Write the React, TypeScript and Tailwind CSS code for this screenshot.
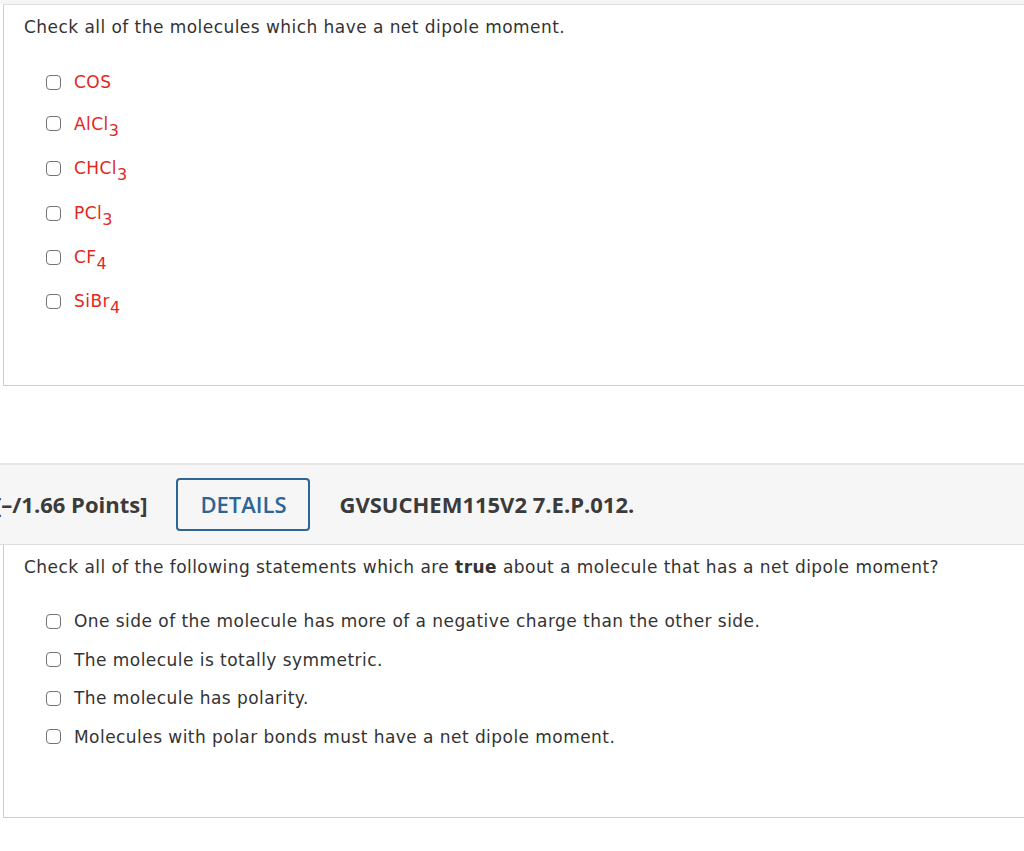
const molecules = [
  { base: 'COS', sub: '', row: 'h-[40px]' },
  { base: 'AlCl', sub: '3', row: 'h-[43px]' },
  { base: 'CHCl', sub: '3', row: 'h-[46px]' },
  { base: 'PCl', sub: '3', row: 'h-[44px]' },
  { base: 'CF', sub: '4', row: 'h-[44px]' },
  { base: 'SiBr', sub: '4', row: 'h-[44px]' },
];

const statements = [
  'One side of the molecule has more of a negative charge than the other side.',
  'The molecule is totally symmetric.',
  'The molecule has polarity.',
  'Molecules with polar bonds must have a net dipole moment.',
];

function Box() {
  return (
    <span className="inline-block h-[15px] w-[15px] shrink-0 rounded-[4px] border-[1.5px] border-[#747474] bg-white" />
  );
}

export default function App() {
  return (
    <div className="min-h-[851px] w-[1024px] overflow-hidden bg-white font-['DejaVu_Sans',Verdana,sans-serif] text-[17px] tracking-[0.45px] text-[#333]">
      {/* leftover band from the question above */}
      <div className="h-[4px] bg-[#f5f5f5]" />

      {/* question 1 */}
      <div className="ml-[3px] h-[382px] border-t border-b border-l border-t-[#dedede] border-b-[#cccccc] border-l-[#cccccc] pl-[20px] pt-[12px]">
        <p className="leading-[20px]">Check all of the molecules which have a net dipole moment.</p>
        <ul className="mt-[25px] pl-[22px]">
          {molecules.map((m) => (
            <li key={m.base} className={`flex items-center ${m.row}`}>
              <Box />
              <span className="ml-[13px] leading-[20px] text-[#e3271c]">
                {m.base}
                {m.sub && <sub className="relative top-[6px] align-baseline text-[16px]">{m.sub}</sub>}
              </span>
            </li>
          ))}
        </ul>
      </div>

      <div className="h-[77px]" />

      {/* question 2 header */}
      <div className="flex h-[82px] items-center border-t-2 border-b border-t-[#e6e6e6] border-b-[#dddddd] bg-[#f6f6f6] font-['Open_Sans',sans-serif] tracking-normal">
        <span className="-ml-[6px] text-[22px] font-bold text-[#3b3b3b]">[–/1.66 Points]</span>
        <span className="ml-[29px] flex h-[53px] w-[134px] items-center justify-center rounded-[4px] border-2 border-[#2c6596] text-[22px] font-semibold text-[#2c6596]">
          DETAILS
        </span>
        <span className="ml-[29px] text-[22px] font-bold text-[#3b3b3b]">GVSUCHEM115V2 7.E.P.012.</span>
      </div>

      {/* question 2 */}
      <div className="ml-[3px] h-[273px] border-b border-l border-[#cccccc] pl-[20px] pt-[12px]">
        <p className="leading-[20px]">
          Check all of the following statements which are <b className="font-bold">true</b> about a molecule that has a net dipole moment?
        </p>
        <ul className="mt-[25px] pl-[22px]">
          {statements.map((s) => (
            <li key={s} className="flex h-[38.5px] items-center">
              <Box />
              <span className="ml-[13px] leading-[20px]">{s}</span>
            </li>
          ))}
        </ul>
      </div>
    </div>
  );
}
